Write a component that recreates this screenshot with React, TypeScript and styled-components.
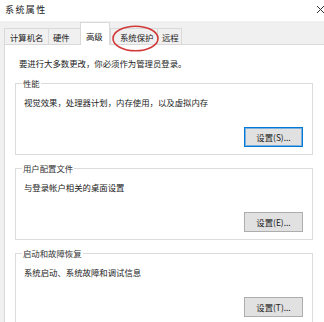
import * as React from "react";
import styled, { createGlobalStyle } from "styled-components";

const GlobalStyle = createGlobalStyle`
  html, body {
    margin: 0;
    padding: 0;
    background: #f0f0f0;
    overflow: hidden;
  }
  body {
    font-family: "Noto Sans CJK SC", "Noto Sans", sans-serif;
    color: #222;
  }
`;

type TabInfo = { label: string; w: number; pl: number; active?: boolean };

const tabs: TabInfo[] = [
  { label: "计算机名", w: 44, pl: 5 },
  { label: "硬件", w: 32, pl: 4 },
  { label: "高级", w: 30, pl: 5, active: true },
  { label: "系统保护", w: 47, pl: 9 },
  { label: "远程", w: 25, pl: 4 },
];

const groups = [
  { title: "性能", text: "视觉效果，处理器计划，内存使用，以及虚拟内存", button: "设置(S)...", focused: true },
  { title: "用户配置文件", text: "与登录帐户相关的桌面设置", button: "设置(E)..." },
  { title: "启动和故障恢复", text: "系统启动、系统故障和调试信息", button: "设置(T)..." },
];

export default function App() {
  return (
    <Window>
      <GlobalStyle />
      <TitleBar>
        <Title>系统属性</Title>
        <CloseIcon width="9" height="9" viewBox="0 0 9 9">
          <path d="M1 1 L8 8 M8 1 L1 8" stroke="#333" strokeWidth="1" fill="none" />
        </CloseIcon>
      </TitleBar>
      <TabStrip>
        {tabs.map((t) => (
          <Tab key={t.label} $w={t.w} $pl={t.pl} $active={!!t.active}>
            {t.label}
          </Tab>
        ))}
      </TabStrip>
      <Panel>
        <Intro>要进行大多数更改，你必须作为管理员登录。</Intro>
        {groups.map((g) => (
          <Group key={g.title}>
            <Legend>{g.title}</Legend>
            <GroupText>{g.text}</GroupText>
            <ButtonRow>
              <Button $focused={!!g.focused}>{g.button}</Button>
            </ButtonRow>
          </Group>
        ))}
      </Panel>
      <Mark width="47" height="27" viewBox="0 0 47 27">
        <ellipse cx="23.5" cy="13.5" rx="22.5" ry="12.3" fill="none" stroke="#d23a3a" strokeWidth="1.6" />
      </Mark>
    </Window>
  );
}

const Window = styled.div`
  position: relative;
  width: 324px;
  height: 322px;
  overflow: hidden;
  background: #f0f0f0;
`;

const TitleBar = styled.div`
  height: 21px;
  background: #fff;
  display: flex;
  align-items: center;
  justify-content: space-between;
  padding-left: 5px;
  box-sizing: border-box;
`;

const Title = styled.div`
  font-size: 9px;
  letter-spacing: 1.4px;
  line-height: 12px;
  margin-top: -2px;
  color: #222;
`;

const CloseIcon = styled.svg`
  margin-right: -1px;
  margin-top: -2px;
`;

const TabStrip = styled.div`
  height: 23px;
  display: flex;
  align-items: flex-end;
  padding-left: 4px;
`;

const Tab = styled.div<{ $w: number; $pl: number; $active: boolean }>`
  box-sizing: border-box;
  width: ${(p) => p.$w}px;
  padding-left: ${(p) => p.$pl}px;
  font-size: 8.4px;
  line-height: 12px;
  white-space: nowrap;
  border: 1px solid #d9d9d9;
  border-bottom: none;
  border-right: none;
  &:last-child {
    border-right: 1px solid #d9d9d9;
  }
  ${(p) =>
    p.$active
      ? `
    height: 23px;
    padding-top: 7px;
    background: #fff;
    border-right: 1px solid #d9d9d9;
    margin-bottom: -1px;
    position: relative;
    z-index: 1;
  `
      : `
    height: 16px;
    padding-top: 2px;
    background: #f0f0f0;
  `}
`;

const Panel = styled.div`
  margin-left: 4px;
  width: 330px;
  height: 300px;
  box-sizing: border-box;
  background: #fff;
  border: 1px solid #d9d9d9;
  padding-left: 10px;
  display: flex;
  flex-direction: column;
`;

const Intro = styled.div`
  font-size: 8.4px;
  line-height: 12px;
  margin-top: 12px;
  padding-left: 4px;
  margin-bottom: 8px;
`;

const Group = styled.fieldset`
  width: 298px;
  box-sizing: border-box;
  margin: 0 0 7px 0;
  padding: 0 9px 7px 8px;
  border: 1px solid #dcdcdc;
  display: flex;
  flex-direction: column;
`;

const Legend = styled.legend`
  font-size: 8.4px;
  line-height: 12px;
  padding: 0 1px;
  margin-left: -2px;
  color: #333;
`;

const GroupText = styled.div`
  font-size: 8.4px;
  line-height: 12px;
  margin-top: 7px;
`;

const ButtonRow = styled.div`
  display: flex;
  justify-content: flex-end;
  margin-top: 19px;
`;

const Button = styled.div<{ $focused: boolean }>`
  width: 59px;
  height: 20px;
  box-sizing: border-box;
  display: flex;
  align-items: center;
  justify-content: center;
  font-size: 8.4px;
  background: #e1e1e1;
  border: 1px solid ${(p) => (p.$focused ? "#0078d7" : "#adadad")};
  box-shadow: ${(p) => (p.$focused ? "inset 0 0 0 1px rgba(0,120,215,0.45)" : "none")};
  color: #222;
`;

const Mark = styled.svg`
  position: absolute;
  left: 112px;
  top: 25px;
`;
